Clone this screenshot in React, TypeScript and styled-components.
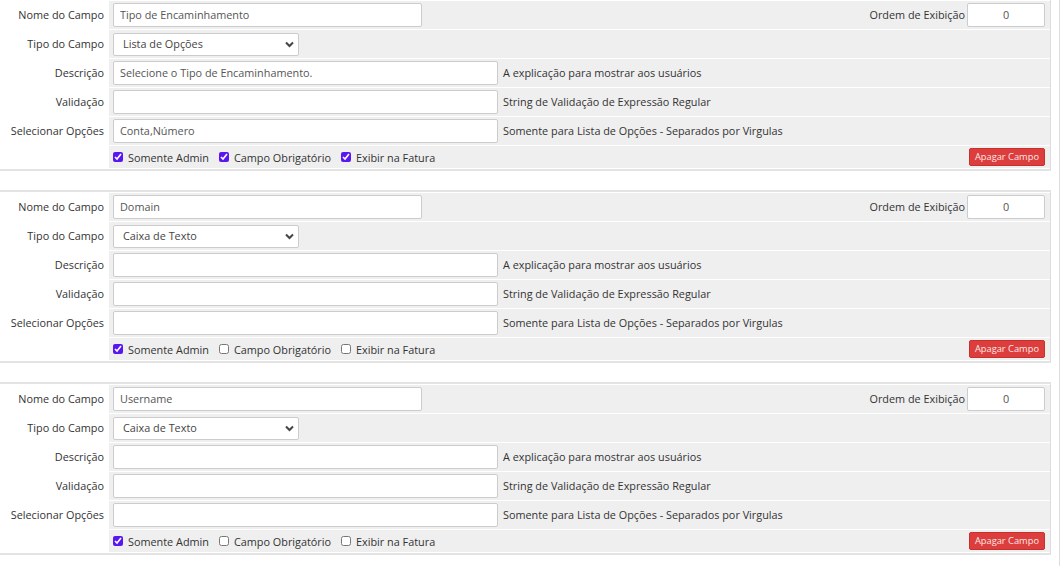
import React from "react";
import styled, { createGlobalStyle } from "styled-components";

const Global = createGlobalStyle`
  html, body { margin: 0; padding: 0; background: #fff; }
  body { font-family: "Open Sans", "Liberation Sans", sans-serif; font-size: 10.85px; color: #333; }
  * { box-sizing: border-box; }
`;

const Page = styled.div`
  width: 1060px;
  border-right: 1px solid #dddddd;
  min-height: 568px;
  margin-top: -2px;
`;

const Block = styled.div`
  width: 1051px;
  border-top: 2px solid #e3e3e3;
  border-bottom: 2px solid #e3e3e3;
  border-right: 1px solid #dddddd;
  padding: 1px 0;
  display: grid;
  grid-template-columns: 108px 1fr;
  grid-template-rows: repeat(5, 28px) 22px;
  row-gap: 1px;
  column-gap: 1px;
  margin-bottom: 19px;
`;

const Label = styled.div`
  display: flex;
  align-items: center;
  justify-content: flex-end;
  padding: 0 4px 2px 0;
  color: #333;
  white-space: nowrap;
`;

const Field = styled.div`
  background: #efefef;
  display: flex;
  align-items: center;
  padding: 0 5px 0 4px;
  gap: 5px;
`;

const Spacer = styled.div`
  flex: 1;
`;

const TextInput = styled.input<{ $w: number; $center?: boolean }>`
  width: ${(p) => p.$w}px;
  height: 24px;
  border: 1px solid #cccccc;
  border-radius: 2px;
  background: #fff;
  font-family: "Open Sans", "Liberation Sans", sans-serif;
  font-size: 10.85px;
  color: #555;
  padding: 0 6px 1px;
  text-align: ${(p) => (p.$center ? "center" : "left")};
  outline: none;
`;

const SelectWrap = styled.div`
  position: relative;
  width: 186px;
  height: 23px;
`;

const Select = styled.select`
  appearance: none;
  width: 100%;
  height: 100%;
  border: 1px solid #cccccc;
  border-radius: 2px;
  background: #fff;
  font-family: "Open Sans", "Liberation Sans", sans-serif;
  font-size: 10.85px;
  color: #444;
  padding: 0 0 1px 9px;
  outline: none;
`;

const Chevron = styled.svg`
  position: absolute;
  right: 5px;
  top: 8px;
  pointer-events: none;
`;

const Help = styled.span`
  color: #333;
  white-space: nowrap;
  padding-bottom: 2px;
`;

const OrderLabel = styled.span`
  color: #333;
  margin-right: -3px;
  padding-bottom: 2px;
`;

const CheckRow = styled.div`
  grid-column: 2;
  background: #efefef;
  display: flex;
  align-items: center;
  padding: 0 5px 0 4px;
`;

const Check = styled.label`
  display: inline-flex;
  align-items: center;
  gap: 5px;
  margin-right: 10px;
  color: #333;
  white-space: nowrap;
`;

const Box = styled.input`
  width: 10px;
  height: 10px;
  margin: 0;
  accent-color: #5b16f0;
`;

const DeleteBtn = styled.button`
  margin-left: auto;
  height: 18px;
  padding: 0 5px;
  background: #dc3d3d;
  border: 1px solid #c9302c;
  border-radius: 2px;
  color: #fde8e8;
  font-family: "Open Sans", "Liberation Sans", sans-serif;
  font-size: 9.3px;
  line-height: 16px;
`;

type Item = {
  name: string;
  type: string;
  desc: string;
  options: string;
  admin: boolean;
  required: boolean;
  invoice: boolean;
};

const items: Item[] = [
  {
    name: "Tipo de Encaminhamento",
    type: "Lista de Opções",
    desc: "Selecione o Tipo de Encaminhamento.",
    options: "Conta,Número",
    admin: true,
    required: true,
    invoice: true,
  },
  { name: "Domain", type: "Caixa de Texto", desc: "", options: "", admin: true, required: false, invoice: false },
  { name: "Username", type: "Caixa de Texto", desc: "", options: "", admin: true, required: false, invoice: false },
];

const types = ["Caixa de Texto", "Lista de Opções", "Caixa de Seleção", "Área de Texto"];

function FieldBlock({ item }: { item: Item }) {
  return (
    <Block>
      <Label>Nome do Campo</Label>
      <Field>
        <TextInput $w={309} defaultValue={item.name} />
        <Spacer />
        <OrderLabel>Ordem de Exibição</OrderLabel>
        <TextInput $w={78} $center defaultValue="0" />
      </Field>
      <Label>Tipo do Campo</Label>
      <Field>
        <SelectWrap>
          <Select defaultValue={item.type}>
            {types.map((t) => (
              <option key={t}>{t}</option>
            ))}
          </Select>
          <Chevron width="9" height="7" viewBox="0 0 9 7">
            <path d="M1 1.5 L4.5 5 L8 1.5" stroke="#444" strokeWidth="2" fill="none" />
          </Chevron>
        </SelectWrap>
      </Field>
      <Label>Descrição</Label>
      <Field>
        <TextInput $w={385} defaultValue={item.desc} />
        <Help>A explicação para mostrar aos usuários</Help>
      </Field>
      <Label>Validação</Label>
      <Field>
        <TextInput $w={385} defaultValue="" />
        <Help>String de Validação de Expressão Regular</Help>
      </Field>
      <Label>Selecionar Opções</Label>
      <Field>
        <TextInput $w={385} defaultValue={item.options} />
        <Help>Somente para Lista de Opções - Separados por Virgulas</Help>
      </Field>
      <CheckRow>
        <Check>
          <Box type="checkbox" defaultChecked={item.admin} />
          Somente Admin
        </Check>
        <Check>
          <Box type="checkbox" defaultChecked={item.required} />
          Campo Obrigatório
        </Check>
        <Check>
          <Box type="checkbox" defaultChecked={item.invoice} />
          Exibir na Fatura
        </Check>
        <DeleteBtn>Apagar Campo</DeleteBtn>
      </CheckRow>
    </Block>
  );
}

export default function App() {
  return (
    <>
      <Global />
      <Page>
        {items.map((it, i) => (
          <FieldBlock key={i} item={it} />
        ))}
      </Page>
    </>
  );
}
